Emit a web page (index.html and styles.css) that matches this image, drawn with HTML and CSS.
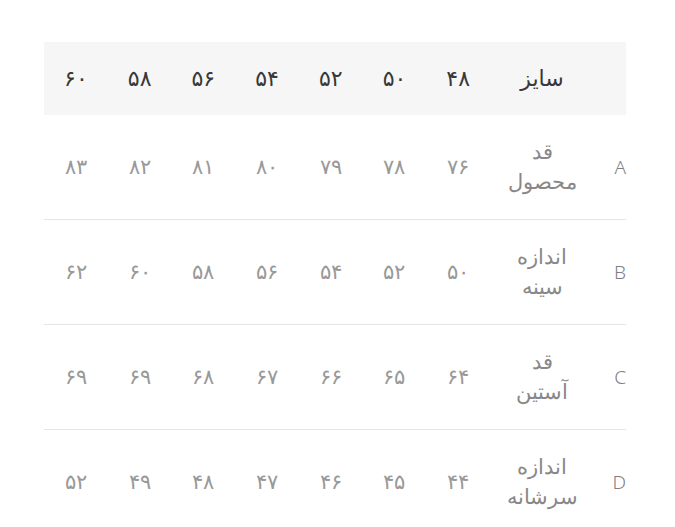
FILE: index.html
```html
<!DOCTYPE html>
<html lang="fa" dir="rtl">
<head>
<meta charset="utf-8">
<link rel="stylesheet" href="styles.css">
</head>
<body>
<div class="wrap">
<table class="size-table">
  <colgroup>
    <col class="c-letter"><col class="c-label">
    <col class="c-num"><col class="c-num"><col class="c-num"><col class="c-num"><col class="c-num"><col class="c-num"><col class="c-num">
  </colgroup>
  <thead>
    <tr>
      <th></th><th>سایز</th><th>۴۸</th><th>۵۰</th><th>۵۲</th><th>۵۴</th><th>۵۶</th><th>۵۸</th><th>۶۰</th>
    </tr>
  </thead>
  <tbody>
    <tr>
      <td class="letter">A</td><td class="label">قد<br>محصول</td><td>۷۶</td><td>۷۸</td><td>۷۹</td><td>۸۰</td><td>۸۱</td><td>۸۲</td><td>۸۳</td>
    </tr>
    <tr>
      <td class="letter">B</td><td class="label">اندازه<br>سینه</td><td>۵۰</td><td>۵۲</td><td>۵۴</td><td>۵۶</td><td>۵۸</td><td>۶۰</td><td>۶۲</td>
    </tr>
    <tr>
      <td class="letter">C</td><td class="label">قد<br>آستین</td><td>۶۴</td><td>۶۵</td><td>۶۶</td><td>۶۷</td><td>۶۸</td><td>۶۹</td><td>۶۹</td>
    </tr>
    <tr>
      <td class="letter">D</td><td class="label">اندازه<br>سرشانه</td><td>۴۴</td><td>۴۵</td><td>۴۶</td><td>۴۷</td><td>۴۸</td><td>۴۹</td><td>۵۲</td>
    </tr>
  </tbody>
</table>
</div>
</body>
</html>
```
FILE: styles.css
```css
html, body {
  margin: 0;
  padding: 0;
  background: #ffffff;
}
body {
  font-family: "DejaVu Sans", "Noto Sans", sans-serif;
  font-weight: 300;
}
.wrap {
  padding: 42px 0 0 44px;
  direction: ltr;
}
.size-table {
  direction: rtl;
  width: 582px;
  border-collapse: collapse;
  table-layout: fixed;
}
.c-letter { width: 32px; }
.c-label { width: 104px; }
.size-table thead tr {
  background: #f6f6f6;
}
.size-table th {
  height: 73px;
  padding: 0;
  font-size: 22px;
  font-weight: 400;
  color: #383838;
  text-align: center;
}
.size-table td {
  height: 104px;
  padding: 0;
  font-size: 21px;
  color: #999999;
  text-align: center;
  border-bottom: 1px solid #e6e6e6;
  line-height: 30px;
}
.size-table td.letter {
  text-align: right;
  font-family: "Noto Sans", "Open Sans", sans-serif;
  font-size: 19px;
  font-weight: 300;
  color: #808080;
}
.size-table td.label {
  font-size: 21px;
  color: #888888;
}
```
